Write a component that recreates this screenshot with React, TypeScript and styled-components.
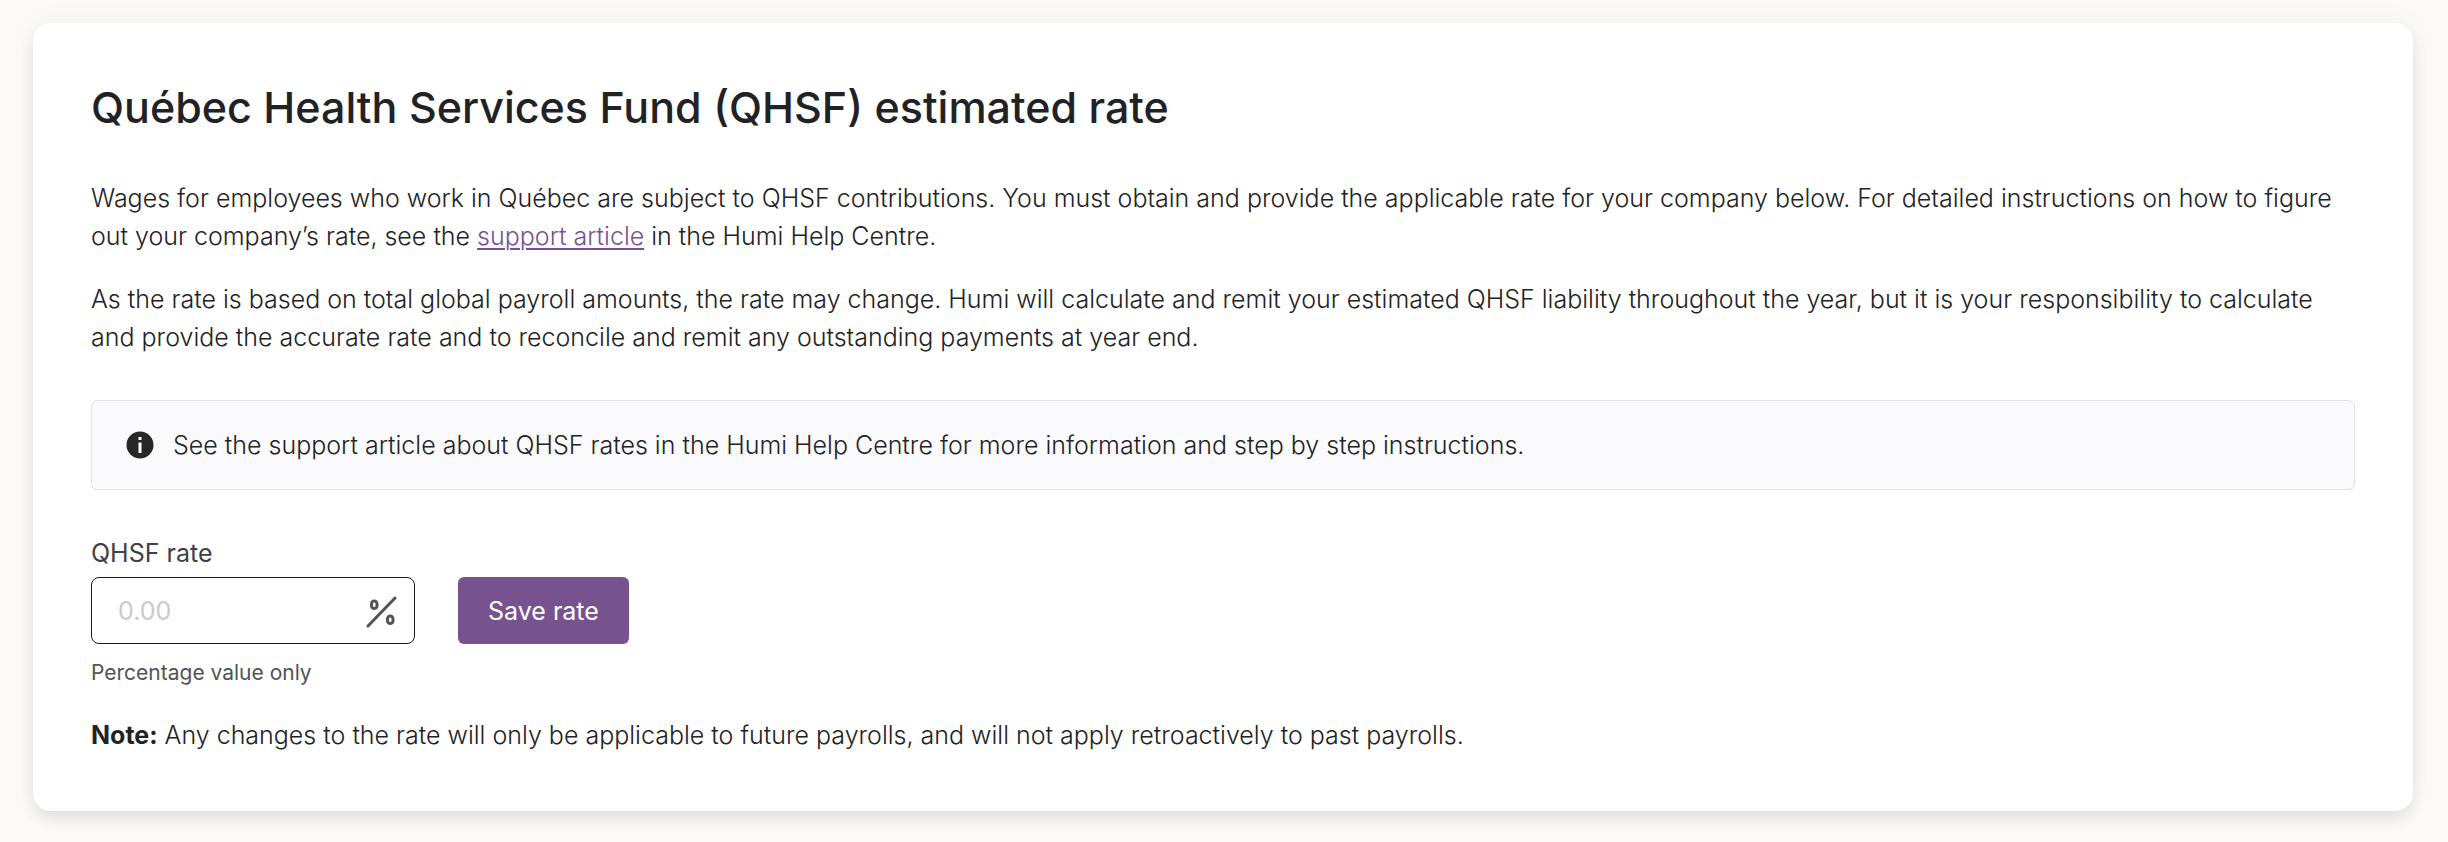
import React, { useState } from 'react';
import styled, { createGlobalStyle } from 'styled-components';

const GlobalStyle = createGlobalStyle`
  * { box-sizing: border-box; }
  body {
    margin: 0;
    background: #fbfaf8;
    color: #222225;
    font-family: Inter, "Liberation Sans", sans-serif;
    font-size: 25px;
    font-weight: 300;
    line-height: 38px;
  }
`;

const Page = styled.main`
  padding: 23px 35px 31px 33px;
`;

const Card = styled.section`
  padding: 55px 58px 57px;
  border-radius: 18px;
  background: #fff;
  box-shadow: 0 8px 16px -2px rgba(39, 30, 50, 0.12), 0 0 32px rgba(39, 39, 42, 0.04);
`;

const Title = styled.h1`
  margin: 0 0 43px;
  font-size: 43px;
  line-height: 58px;
  font-weight: 500;
`;

const Paragraph = styled.p`
  margin: 0 0 25px;
`;

const Link = styled.a`
  color: #78528f;
  text-decoration: underline;
  text-decoration-thickness: 2px;
  text-underline-offset: 3px;
`;

const Notice = styled.div`
  display: flex;
  align-items: center;
  gap: 19px;
  margin: 44px 0;
  padding: 25px 34px;
  border: 1px solid #e2e2e6;
  border-radius: 6px;
  background: #fafafc;
`;

const RateForm = styled.form`
  display: grid;
  grid-template-columns: 324px max-content;
  column-gap: 43px;
  margin-bottom: 27px;
  font-weight: 400;
`;

const Label = styled.label`
  grid-column: 1 / -1;
  margin-bottom: 5px;
  color: #3f3f46;
`;

const Field = styled.div`
  display: flex;
  align-items: center;
  height: 67px;
  padding: 0 17px 0 26px;
  border: 1px solid #18181b;
  border-radius: 8px;
`;

const RateInput = styled.input`
  flex: 1;
  min-width: 0;
  padding: 0;
  border: 0;
  outline: 0;
  background: transparent;
  color: inherit;
  font: inherit;
  &::placeholder { color: #c9c9cb; opacity: 1; }
`;

const SaveButton = styled.button`
  height: 67px;
  padding: 0 30px;
  border: 0;
  border-radius: 6px;
  background: #78528f;
  color: #fff;
  font: inherit;
`;

const Hint = styled.small`
  grid-column: 1 / -1;
  margin-top: 13px;
  color: #52525b;
  font-size: 21px;
  line-height: 32px;
`;

const Note = styled.p`
  margin: 0;
`;

const Strong = styled.strong`
  font-weight: 700;
`;

const InfoIcon = () => (
  <svg width="28" height="28" viewBox="0 0 28 28" aria-hidden="true">
    <circle cx="14" cy="14" r="13.5" fill="#27272a" />
    <path d="M12.5 6h3v3h-3zM12.5 11.5h3v10.5h-3z" fill="#fff" />
  </svg>
);

const PercentIcon = () => (
  <svg width="32" height="34" viewBox="0 0 32 34" fill="none" stroke="#52525b" strokeWidth="3" strokeLinecap="round" aria-hidden="true">
    <path d="M30 4L3 32" />
    <rect x="6.5" y="7" width="5.5" height="7.5" rx="2.75" />
    <rect x="22.5" y="22" width="5.5" height="7.5" rx="2.75" />
  </svg>
);

export default function App() {
  const [rate, setRate] = useState('');
  return (
    <>
      <GlobalStyle />
      <Page>
        <Card>
          <Title>Québec Health Services Fund (QHSF) estimated rate</Title>
          <Paragraph>
            Wages for employees who work in Québec are subject to QHSF contributions. You must obtain and provide the
            applicable rate for your company below. For detailed instructions on how to figure out your company’s rate,
            see the <Link href="#support-article">support article</Link> in the Humi Help Centre.
          </Paragraph>
          <Paragraph>
            As the rate is based on total global payroll amounts, the rate may change. Humi will calculate and remit
            your estimated QHSF liability throughout the year, but it is your responsibility to calculate and provide
            the accurate rate and to reconcile and remit any outstanding payments at year end.
          </Paragraph>
          <Notice>
            <InfoIcon />
            <span>
              See the support article about QHSF rates in the Humi Help Centre for more information and step by step
              instructions.
            </span>
          </Notice>
          <RateForm onSubmit={(event) => event.preventDefault()}>
            <Label htmlFor="qhsf-rate">QHSF rate</Label>
            <Field>
              <RateInput
                id="qhsf-rate"
                inputMode="decimal"
                placeholder="0.00"
                aria-describedby="qhsf-rate-hint"
                value={rate}
                onChange={(event) => setRate(event.target.value)}
              />
              <PercentIcon />
            </Field>
            <SaveButton type="submit">Save rate</SaveButton>
            <Hint id="qhsf-rate-hint">Percentage value only</Hint>
          </RateForm>
          <Note>
            <Strong>Note:</Strong> Any changes to the rate will only be applicable to future payrolls, and will not
            apply retroactively to past payrolls.
          </Note>
        </Card>
      </Page>
    </>
  );
}
